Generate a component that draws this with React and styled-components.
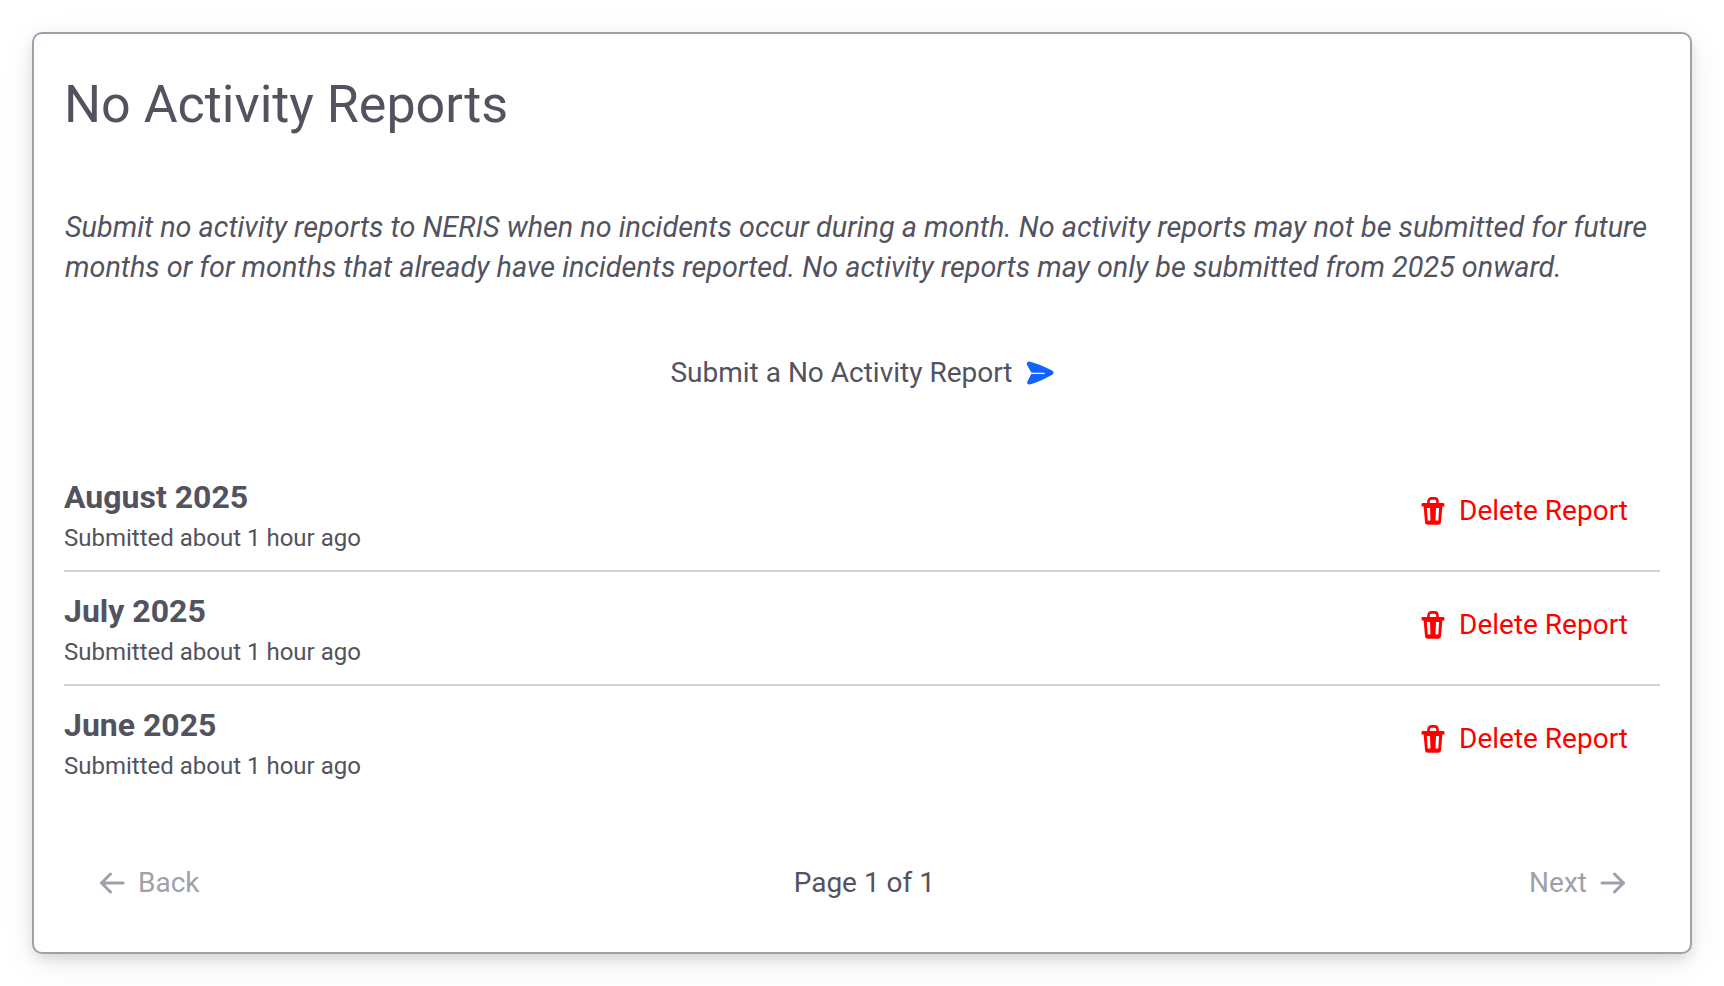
import styled, { createGlobalStyle } from "styled-components"

const GlobalStyle = createGlobalStyle`
    html, body {
        margin: 0;
        padding: 0;
        background: #fff;
    }
    body {
        font-family: Roboto, "Liberation Sans", sans-serif;
        color: #53535f;
    }
`

const reports = ["August 2025", "July 2025", "June 2025"]

const TrashIcon = () => (
    <svg width="24" height="28" viewBox="0 0 24 28" fill="none">
        <path d="M7.500 7V4.500C7.500 2.500 8.800 1.400 10.500 1.400h3c1.700 0 3 1.100 3 3.100V7" stroke="#ff0000" strokeWidth="2.600" />
        <path d="M.6 7.300C.6 6.500 1.100 6 1.900 6h20.200c.8 0 1.300.5 1.300 1.300V9.400H.6z" fill="#ff0000" />
        <path fillRule="evenodd" d="M2.600 9h18.800l-1.400 16c-.1 1.700-1.200 2.700-2.800 2.700H6.800C5.200 27.700 4.100 26.700 4 25L2.600 9zm3.300 2l.8 12.500h2.800L9 11H5.900zm9.100 0l-.5 12.500h2.800l.8-12.500H15z" fill="#ff0000" />
    </svg>
)

const SendIcon = () => (
    <svg width="28" height="24" viewBox="0 0 28 24">
        <path d="M3.200 .4 Q13 2.600 26.600 9.800 Q28.600 11.600 26.600 13.400 Q14 20.600 3.800 23.400 Q.6 23.800 1.200 21 L5.200 13.100 H18.500 V11.700 H5.400 L.8 3.400 Q.4 .4 3.200 .4Z" fill="#1463ff" />
    </svg>
)

const ArrowIcon = ({ $flip }) => (
    <ArrowSvg $flip={$flip} width="26" height="22" viewBox="0 0 26 22" fill="none" stroke="#a0a0ac" strokeWidth="3" strokeLinecap="round" strokeLinejoin="round">
        <path d="M2 11h21.500M14.500 2l9 9-9 9" />
    </ArrowSvg>
)

const App = () => {
    return (
        <Page>
            <GlobalStyle />
            <Card>
                <Title>No Activity Reports</Title>
                <Intro>
                    Submit no activity reports to NERIS when no incidents occur during a month. No activity reports may not be submitted for future months or for months that already have incidents reported. No activity reports may only be submitted from 2025 onward.
                </Intro>
                <SubmitRow>
                    <SubmitButton>
                        Submit a No Activity Report
                        <SendIcon />
                    </SubmitButton>
                </SubmitRow>
                <ReportList>
                    {reports.map((month) => (
                        <ReportRow key={month}>
                            <ReportInfo>
                                <ReportMonth>{month}</ReportMonth>
                                <ReportMeta>Submitted about 1 hour ago</ReportMeta>
                            </ReportInfo>
                            <DeleteButton>
                                <TrashIcon />
                                Delete Report
                            </DeleteButton>
                        </ReportRow>
                    ))}
                </ReportList>
                <Pagination>
                    <PageLink>
                        <ArrowIcon $flip />
                        Back
                    </PageLink>
                    <PageLabel>Page 1 of 1</PageLabel>
                    <PageLink>
                        Next
                        <ArrowIcon />
                    </PageLink>
                </Pagination>
            </Card>
        </Page>
    )
}

const Page = styled.div`
    padding: 32px;
    height: 986px;
    box-sizing: border-box;
`

const Card = styled.div`
    width: 1660px;
    height: 922px;
    box-sizing: border-box;
    padding: 41px 30px 0 30px;
    border: 2px solid #a0a0ac;
    border-radius: 10px;
    background: #fff;
    box-shadow: 0 6px 14px -2px rgba(0, 0, 0, 0.14), 0 8px 36px rgba(0, 0, 0, 0.07);
`

const Title = styled.h1`
    margin: 0;
    font-size: 52px;
    line-height: 60px;
    font-weight: 400;
    color: #53535f;
`

const Intro = styled.p`
    margin: 72px 0 0;
    padding-left: 1px;
    font-size: 28.800px;
    line-height: 40px;
    font-style: italic;
    color: #53535f;
`

const SubmitRow = styled.div`
    display: flex;
    justify-content: center;
    margin-top: 66px;
`

const SubmitButton = styled.div`
    display: flex;
    align-items: center;
    gap: 13px;
    font-size: 28px;
    line-height: 40px;
`

const ReportList = styled.div`
    margin-top: 65px;
`

const ReportRow = styled.div`
    display: flex;
    align-items: flex-start;
    justify-content: space-between;
    height: 114px;
    box-sizing: border-box;
    padding: 19px 32px 0 0;
    border-bottom: 2px solid #d1d1d8;

    &:last-child {
        border-bottom: none;
    }
`

const ReportInfo = styled.div`
    display: flex;
    flex-direction: column;
    gap: 3px;
`

const ReportMonth = styled.div`
    font-size: 32px;
    line-height: 40px;
    font-weight: 700;
`

const ReportMeta = styled.div`
    font-size: 24px;
    line-height: 36px;
`

const DeleteButton = styled.div`
    display: flex;
    align-items: center;
    gap: 14px;
    margin-top: 14px;
    font-size: 28px;
    line-height: 40px;
    color: #ff0000;
`

const Pagination = styled.div`
    display: flex;
    align-items: center;
    justify-content: space-between;
    margin-top: 63px;
    padding: 0 34px 0 35px;
`

const PageLink = styled.div`
    display: flex;
    align-items: center;
    gap: 13px;
    font-size: 28px;
    line-height: 40px;
    color: #a0a0ac;
`

const PageLabel = styled.div`
    font-size: 28px;
    line-height: 40px;
`

const ArrowSvg = styled.svg`
    transform: ${({ $flip }) => ($flip ? "scaleX(-1)" : "none")};
`

export default App
